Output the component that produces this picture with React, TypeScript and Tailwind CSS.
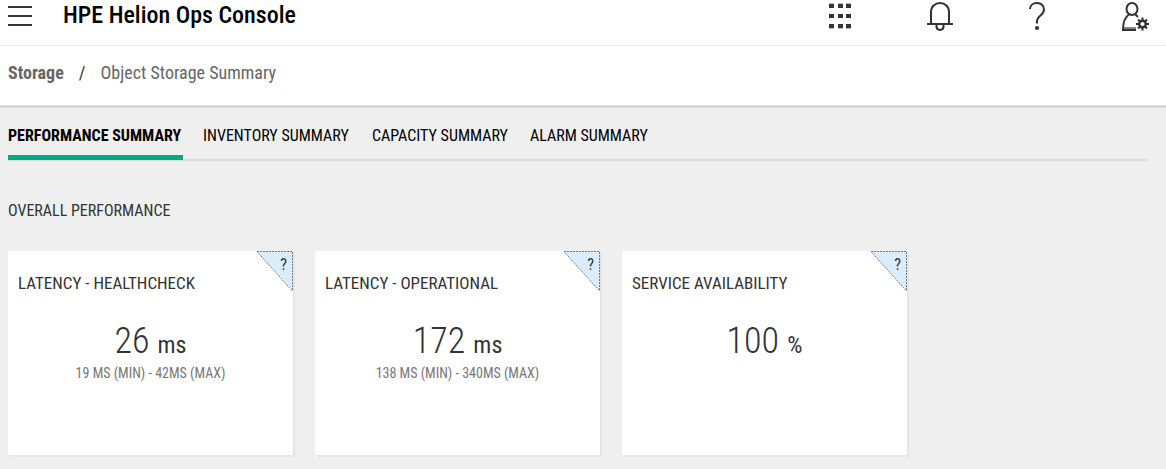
import { useState } from "react";

const tabs = [
  { label: "PERFORMANCE SUMMARY", width: "min-w-[175px]" },
  { label: "INVENTORY SUMMARY", width: "min-w-[149px]" },
  { label: "CAPACITY SUMMARY", width: "min-w-[138px]" },
  { label: "ALARM SUMMARY", width: "min-w-[119px]" },
];

const metrics = [
  { title: "LATENCY - HEALTHCHECK", value: "26", unit: "ms", range: "19 MS (MIN) - 42MS (MAX)" },
  { title: "LATENCY - OPERATIONAL", value: "172", unit: "ms", range: "138 MS (MIN) - 340MS (MAX)" },
  { title: "SERVICE AVAILABILITY", value: "100", unit: "%", range: "" },
];

function MenuIcon() {
  return (
    <svg width="24" height="22" viewBox="0 0 24 22" stroke="#333" strokeWidth="2" aria-hidden="true">
      <path d="M0 2H24M0 11H24M0 20H24" />
    </svg>
  );
}

function GridIcon() {
  return (
    <svg width="22" height="26" viewBox="0 0 22 26" aria-hidden="true">
      {[0, 9, 17].map((x) => (
        <g key={x}>
          <path d={`M${x} 0h5v1h-5zM${x} 25h5v1h-5z`} fill="#bbb" />
          <path d={`M${x} 1h5v4h-5zM${x} 11h5v4h-5zM${x} 21h5v4h-5z`} fill="#333" />
        </g>
      ))}
    </svg>
  );
}

function BellIcon() {
  return (
    <svg width="26" height="30" viewBox="0 0 26 30" fill="none" stroke="#333" strokeWidth="2" aria-hidden="true">
      <path d="M4 22V10C4 4.500 8 1 13 1S22 4.500 22 10V22M0 22H26M9.500 22.500V24.500C9.500 29 16.500 29 16.500 24.500V22.500" />
    </svg>
  );
}

function HelpIcon() {
  return (
    <svg width="16" height="30" viewBox="0 0 16 30" fill="none" stroke="#333" strokeWidth="2" aria-hidden="true">
      <path d="M1 7C1 3.500 4 1 8 1S15 3.700 15 7.500C15 14 8 13 8 19.500V21.500" />
      <circle cx="8" cy="26" r="2.100" fill="#333" stroke="none" />
    </svg>
  );
}

function UserSettingsIcon() {
  return (
    <svg width="28" height="30" viewBox="0 0 28 30" fill="none" stroke="#333" strokeWidth="2" aria-hidden="true">
      <ellipse cx="11" cy="7" rx="5.500" ry="6" />
      <path d="M8 12.500C4 15 2 19 2 28H15M14.500 12.500L17 15" />
      <path d="M3 26H15" stroke="#888" strokeWidth="2" />
      <circle cx="21.500" cy="22" r="3.300" strokeWidth="2.400" />
      <path d="M21.500 15.500V19M21.500 25V28.500M15 22H18.500M24.500 22H28M17 17.500L19.500 20M23.500 24L26 26.500M26 17.500L23.500 20M19.500 24L17 26.500" />
    </svg>
  );
}

function HelpCorner({ title }: { title: string }) {
  return (
    <button type="button" aria-label={`Help: ${title}`} className="absolute top-0 right-0 h-10 w-9 cursor-pointer">
      <svg className="absolute inset-0" width="36" height="40" viewBox="0 0 36 40" aria-hidden="true">
        <path d="M0 0H36V40Z" fill="#dbecfd" />
        <path d="M0 0.500H35.500V40M35 39.500L0 0.500" fill="none" stroke="#777" strokeDasharray="2 1" />
      </svg>
      <span className="absolute top-1 right-1.5 text-base leading-5 text-[#333]">?</span>
    </button>
  );
}

export default function App() {
  const [active, setActive] = useState(0);

  return (
    <div className="min-h-screen bg-[#efefef] font-['Roboto_Condensed',Roboto,sans-serif] text-[#333]">
      <header className="flex h-[46px] items-start justify-between border-b border-[#ebebeb] bg-white pr-[17px] pl-2">
        <div className="flex items-start gap-[31px]">
          <button type="button" aria-label="Menu" className="mt-[5px] cursor-pointer">
            <MenuIcon />
          </button>
          <h1 className="text-2xl leading-[30px] font-medium whitespace-nowrap text-black">HPE Helion Ops Console</h1>
        </div>
        <nav aria-label="Tools" className="flex items-start gap-[76px] pt-0.5">
          <button type="button" aria-label="Applications" className="cursor-pointer pt-px"><GridIcon /></button>
          <button type="button" aria-label="Notifications" className="cursor-pointer"><BellIcon /></button>
          <button type="button" aria-label="Help" className="cursor-pointer"><HelpIcon /></button>
          <button type="button" aria-label="User settings" className="cursor-pointer"><UserSettingsIcon /></button>
        </nav>
      </header>

      <nav aria-label="Breadcrumb" className="border-b-3 border-[#d9d9d9] bg-white px-2 pt-[15px] pb-5">
        <ol className="flex gap-[15px] text-lg leading-6 text-[#666]">
          <li><a href="#storage" className="font-bold">Storage</a></li>
          <li aria-hidden="true" className="text-[#333]">/</li>
          <li aria-current="page">Object Storage Summary</li>
        </ol>
      </nav>

      <main className="pr-[18px] pl-2">
        <div role="tablist" className="flex gap-5 border-b-2 border-[#dcdcdc] pt-4">
          {tabs.map((tab, i) => (
            <button
              key={tab.label}
              type="button"
              role="tab"
              aria-selected={i === active}
              onClick={() => setActive(i)}
              className={`${tab.width} -mb-px cursor-pointer border-b-5 pb-[7px] text-left text-base leading-6 whitespace-nowrap text-black ${
                i === active ? "border-[#01a982] font-bold" : "border-transparent"
              }`}
            >
              {tab.label}
            </button>
          ))}
        </div>

        <h2 className="pt-10 text-base leading-5">OVERALL PERFORMANCE</h2>

        <div className="flex flex-wrap gap-[22px] pt-[30px]">
          {metrics.map((m) => (
            <section
              key={m.title}
              className="relative min-h-[204px] w-[285px] bg-white px-2.5 pt-5 shadow-[2px_2px_0_#e5e5e5]"
            >
              <HelpCorner title={m.title} />
              <h3 className="text-[17px] leading-6">{m.title}</h3>
              <p className="pt-7 text-center text-4xl leading-9 font-light">
                {m.value} <span className="text-2xl leading-9 font-normal">{m.unit}</span>
              </p>
              <p className="pt-0.5 text-center text-sm leading-4 text-[#777]">{m.range}</p>
            </section>
          ))}
        </div>
      </main>
    </div>
  );
}
